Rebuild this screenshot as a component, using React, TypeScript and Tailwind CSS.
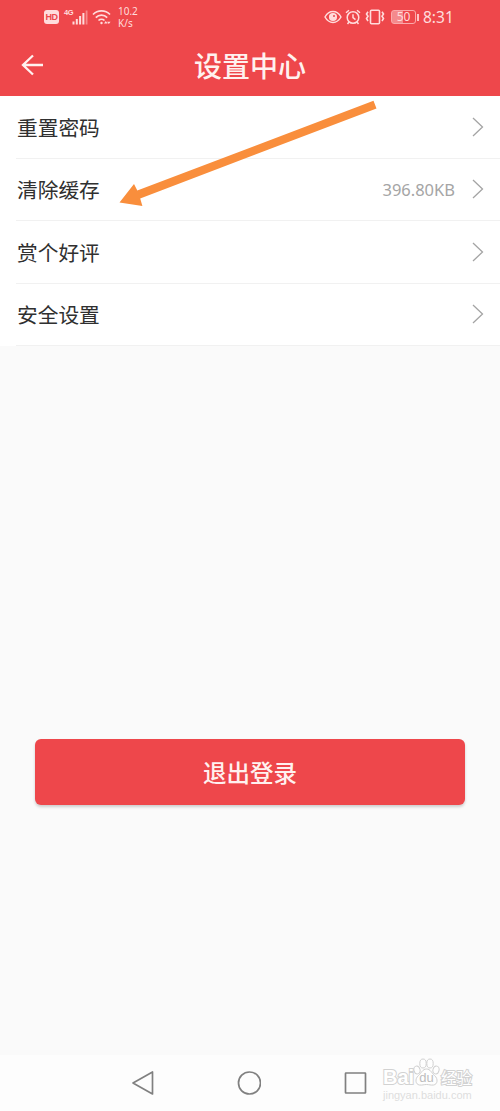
const rows = [
  { label: "重置密码", value: "" },
  { label: "清除缓存", value: "396.80KB" },
  { label: "赏个好评", value: "" },
  { label: "安全设置", value: "" },
];

function StatusBar() {
  return (
    <div className="flex h-[34px] items-center justify-between pl-[44px] pr-[44px] text-[#ffdcdc]">
      <div className="flex items-center">
        <div className="flex h-[14px] w-[15px] items-center justify-center rounded-[3px] bg-[#ffdcdc] font-['Liberation_Sans',sans-serif] text-[9px] font-bold leading-none tracking-tighter text-[#ec484c]">
          HD
        </div>
        <span className="mb-[9px] ml-[5px] w-[8px] font-['Liberation_Sans',sans-serif] text-[7.5px] font-bold leading-none tracking-tighter">
          4G
        </span>
        <svg className="h-[15px] w-[16px]" viewBox="0 0 16 15" fill="currentColor">
          <rect x="0.5" y="11.5" width="2" height="3" />
          <rect x="3.8" y="9" width="2" height="5.5" />
          <rect x="7.1" y="6" width="2" height="8.5" />
          <rect x="10.4" y="3" width="2" height="11.5" />
          <rect x="13.7" y="0.5" width="1.8" height="14" opacity="0.45" />
        </svg>
        <svg className="ml-[4px] h-[16px] w-[20px]" viewBox="0 0 20 16" fill="none" stroke="currentColor" strokeWidth="1.7">
          <path d="M1 5.5a12 12 0 0 1 17 0M3.8 8.6a8 8 0 0 1 11.4 0M6.5 11.5a4.4 4.4 0 0 1 6 0" />
          <circle cx="9.5" cy="14" r="1.2" fill="currentColor" stroke="none" />
          <path d="M12 14.500l1.800-2.500l1.800 2.500zM15 12.800h3.600l-1.800 2.200z" fill="currentColor" stroke="none" />
        </svg>
        <div className="ml-[6px] font-['Noto_Sans',sans-serif] text-[10px] leading-[12px]">
          <div>10.2</div>
          <div>K/s</div>
        </div>
      </div>
      <div className="flex items-center">
        <svg className="h-[14px] w-[18px]" viewBox="0 0 18 14" fill="none" stroke="currentColor" strokeWidth="1.5">
          <path d="M1 7c4-7.2 12-7.2 16 0c-4 7.2-12 7.2-16 0z" />
          <circle cx="9" cy="7" r="3.3" fill="currentColor" />
          <circle cx="10" cy="6" r="1" fill="#ec484c" stroke="none" />
        </svg>
        <svg className="ml-[3px] h-[16px] w-[16px]" viewBox="0 0 16 16" fill="none" stroke="currentColor" strokeWidth="1.5">
          <circle cx="8" cy="8.5" r="5.8" />
          <path d="M8 5.2v3.5l2.5 2M1 3.8L4 1.2M15 3.8l-3-2.6M4 13l-1.5 2M12 13l1.5 2" />
        </svg>
        <svg className="ml-[4px] h-[16px] w-[20px]" viewBox="0 0 20 16" fill="none" stroke="currentColor" strokeWidth="1.6">
          <rect x="5.5" y="1.2" width="9" height="13.6" rx="1" />
          <path d="M3 2.8L1.5 5L3 7.2L1.5 9.5L3 12M17 2.8L18.500 5L17 7.2L18.500 9.500L17 12" />
        </svg>
        <div className="ml-[6px] flex h-[14px] w-[25px] items-center justify-center rounded-[3px] border border-[#fba9aa] bg-[linear-gradient(90deg,#f48a8c_50%,transparent_50%)] font-['Noto_Sans',sans-serif] text-[12px] leading-none">
          50
        </div>
        <div className="ml-px h-[7px] w-[2px] bg-[#ffc3c4]" />
        <span className="ml-[4px] w-[33px] whitespace-nowrap pt-[2px] font-['Noto_Sans',sans-serif] text-[15.5px] leading-none">
          8:31
        </span>
      </div>
    </div>
  );
}

function Chevron() {
  return (
    <svg className="h-5 w-3" viewBox="0 0 12 20" fill="none" stroke="#a4a4a4" strokeWidth="1.3">
      <path d="M1 1l9.500 9L1 19" />
    </svg>
  );
}

function Watermark() {
  return (
    <div className="absolute left-[383px] top-[1px] w-[94px]">
      <div className="flex h-[31px] items-end leading-none text-white">
        <span className="w-[30px] font-['Liberation_Sans',sans-serif] text-[20px] font-bold [paint-order:stroke_fill] [-webkit-text-stroke:2px_#d2d2d2]">
          Bai
        </span>
        <div className="relative h-[30px] w-[27px]">
          <svg className="absolute inset-0 h-[30px] w-[27px]" viewBox="0 0 27 30" fill="#fefefe" stroke="#d0d0d0" strokeWidth="1">
            <ellipse cx="4" cy="13" rx="3" ry="4" transform="rotate(-15 4 13)" />
            <ellipse cx="10" cy="6.500" rx="3.200" ry="4.500" />
            <ellipse cx="17" cy="6.500" rx="3.200" ry="4.500" />
            <ellipse cx="23" cy="13" rx="3" ry="4" transform="rotate(15 23 13)" />
            <path d="M13.500 12c4 0 5 4 8 6.500c4 3.500 3 9-1 9.500c-3 .4-4-.5-7-.5s-4 .9-7 .5c-4-.5-5-6-1-9.500c3-2.500 4-6.500 8-6.500z" />
          </svg>
          <span className="absolute inset-x-0 bottom-[3px] text-center font-['Liberation_Sans',sans-serif] text-[13px] text-[#bdbdbd]">
            du
          </span>
        </div>
        <span className="mb-[2px] ml-px whitespace-nowrap font-['Noto_Sans_CJK_SC',sans-serif] text-[15.500px] [paint-order:stroke_fill] [-webkit-text-stroke:2px_#d2d2d2]">
          经验
        </span>
      </div>
      <div className="mt-[2px] whitespace-nowrap font-['Liberation_Sans',sans-serif] text-[11px] leading-[12px] text-[#dedede]">
        jingyan.baidu.com
      </div>
    </div>
  );
}

export default function App() {
  return (
    <div className="relative flex h-[1111px] w-[500px] flex-col overflow-hidden bg-[#fafafa] font-['Noto_Sans_CJK_SC',sans-serif]">
      <header className="h-[96px] shrink-0 bg-[#ee474b]">
        <StatusBar />
        <div className="grid h-[62px] grid-cols-[70px_1fr_70px] items-center">
          <svg className="ml-[21px] h-[22px] w-[23px]" viewBox="0 0 23 22" fill="none" stroke="#fff1ef" strokeWidth="2.300">
            <path d="M12 1.500L2 11l10 9.500M2 11h20" />
          </svg>
          <h1 className="text-center font-['AR_PL_UKai_CN','KaiTi','Noto_Sans_CJK_SC',sans-serif] text-[28px] font-medium leading-none text-[#fff1ef]">
            设置中心
          </h1>
        </div>
      </header>

      <ul className="shrink-0 bg-white">
        {rows.map((row) => (
          <li key={row.label} className="ml-4 flex h-[62.5px] items-center border-b border-[#f1f1f1] pl-[1px] pr-4">
            <span className="flex-1 pt-px font-['AR_PL_UKai_CN','KaiTi','Noto_Sans_CJK_SC',sans-serif] text-[20.700px] leading-none text-[#303030]">
              {row.label}
            </span>
            <span className="mr-[17px] pt-[2px] font-['Noto_Sans',sans-serif] text-[16.500px] leading-none text-[#a5a5a5]">
              {row.value}
            </span>
            <Chevron />
          </li>
        ))}
      </ul>

      <div className="flex flex-1 flex-col px-[35px] pt-[393px]">
        <button className="h-[66px] w-full rounded-[6px] bg-[#ee474b] pt-[2px] font-['AR_PL_UKai_CN','KaiTi','Noto_Sans_CJK_SC',sans-serif] text-[23.500px] font-medium leading-none text-[#fff1ef] shadow-[0_2px_3px_rgba(0,0,0,0.18)]">
          退出登录
        </button>
      </div>

      <nav className="relative h-[56px] shrink-0 bg-[#fdfdfd]">
        <div className="flex h-full items-center gap-[82px] pl-[131px]">
          <svg className="h-6 w-6" viewBox="0 0 24 24" fill="none" stroke="#808080" strokeWidth="1.700" strokeLinejoin="round">
            <path d="M21.500 1v22L2 12z" />
          </svg>
          <svg className="h-6 w-6" viewBox="0 0 24 24" fill="none" stroke="#808080" strokeWidth="1.700">
            <circle cx="12.500" cy="12" r="11" />
          </svg>
          <svg className="h-6 w-6" viewBox="0 0 24 24" fill="none" stroke="#808080" strokeWidth="1.700">
            <rect x="2.500" y="2" width="20" height="20" rx="0.500" />
          </svg>
        </div>
        <Watermark />
      </nav>

      {/* Pointer to the clear-cache row */}
      <svg className="pointer-events-none absolute left-[115px] top-[96px] h-[115px] w-[265px]" viewBox="115 96 265 115">
        <path d="M119.500 202.500L134 184l3.300 6.600L373.500 100.700l3 7.700L140.200 198.500l2.200 7.500z" fill="#f98e3c" />
      </svg>
    </div>
  );
}
